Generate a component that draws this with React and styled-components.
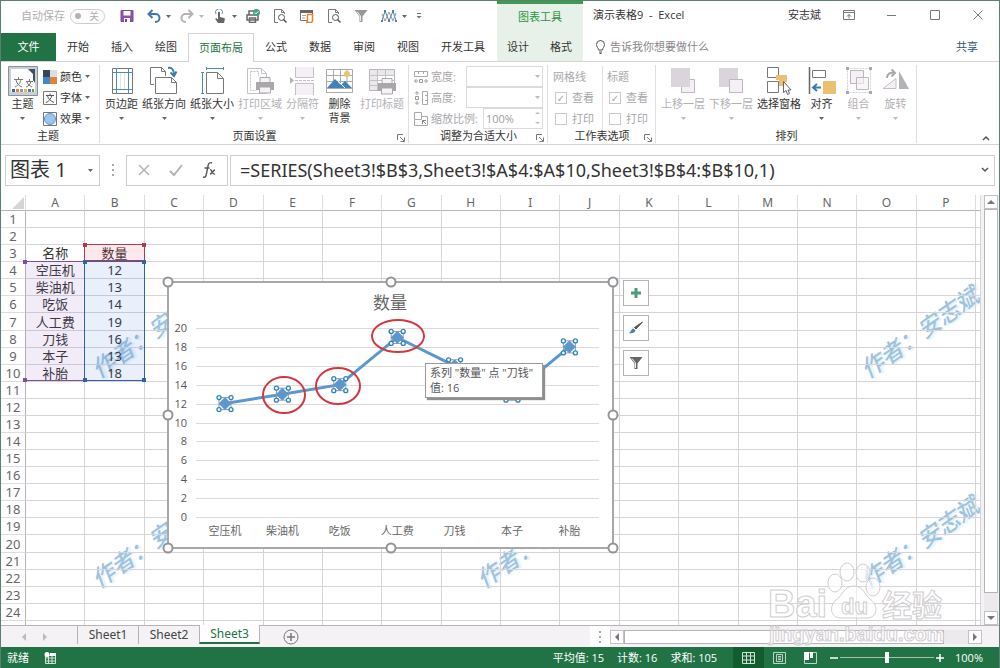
import React from "react";
import styled, { createGlobalStyle, css } from "styled-components";

const GlobalStyle = createGlobalStyle`
	* {
		box-sizing: border-box;
	}
	body {
		margin: 0;
		background: #fff;
		color: #333;
		font-family: "Open Sans", "Noto Sans CJK SC", sans-serif;
		font-size: 11px;
		line-height: 14px;
	}
	button, input, select {
		font: inherit;
		color: inherit;
	}
	button {
		padding: 0;
		border: 0;
		background: none;
	}
	svg {
		display: block;
		flex: none;
	}
`;

const Window = styled.div`
	position: relative;
	display: flex;
	flex-direction: column;
	height: 100vh;
	min-height: 600px;
	overflow: hidden;
	border: 1px solid #5c7f73;
	border-bottom: 0;
`;

/* title bar */

const HeadGrid = styled.div`
	display: grid;
	grid-template-columns: 496px 86px 1fr;
	height: ${(props) => props.$height}px;
`;

const QuickAccess = styled.div`
	display: flex;
	align-items: center;
	gap: 13px;
	padding: 0 0 2px 20px;
`;

const AutoSave = styled.label`
	display: flex;
	align-items: center;
	gap: 5px;
	margin-right: 2px;
	color: #b0adb2;
`;

const Toggle = styled.button`
	display: flex;
	align-items: center;
	justify-content: space-between;
	width: 35px;
	height: 15px;
	padding: 0 5px 0 4px;
	border: 1px solid #cfccd1;
	border-radius: 8px;
	font-size: 10px;
	line-height: 12px;

	&::before {
		content: "";
		width: 6px;
		height: 6px;
		border-radius: 50%;
		background: #b5b2b7;
	}
`;

const QuickButton = styled.button`
	display: flex;
	align-items: center;
	gap: 5px;
	margin-right: ${(props) => (props.$split ? "-4px" : "0")};
`;

const ContextTitle = styled.div`
	display: flex;
	align-items: center;
	justify-content: center;
	padding-bottom: 4px;
	border-top: 3px solid #3f9b4f;
	background: #e7f1e9;
	color: #2c9440;
`;

const TitleRight = styled.div`
	display: flex;
	align-items: center;
	justify-content: space-between;
	padding: 0 14px 4px 10px;
`;

const WindowButtons = styled.div`
	display: flex;
	align-items: center;
	gap: 29px;

	span {
		margin-right: -8px;
	}
`;

/* ribbon tabs */

const TabList = styled.div`
	display: flex;
	background: ${(props) => (props.$context ? "#e7f1e9" : "none")};
`;

const FileTab = styled.button`
	width: 55px;
	background: #217346;
	color: #fff;
`;

const Tab = styled.button`
	padding: 0 ${(props) => (props.$context ? "10px" : "11px")};
	${(props) =>
		props.$active &&
		css`
			position: relative;
			margin-bottom: -1px;
			border: 1px solid #d5d3d6;
			border-bottom: 0;
			padding: 0 10px;
			background: #fff;
			color: #217346;
		`}
`;

const TabsRight = styled.div`
	display: flex;
	align-items: center;
	justify-content: space-between;
	padding: 0 21px 0 12px;
	color: #8a878c;
`;

const TellMe = styled.button`
	display: flex;
	align-items: center;
	gap: 4px;
`;

const Share = styled.button`
	color: #2a5a74;
`;

/* ribbon */

const Ribbon = styled.div`
	display: flex;
	height: 84px;
	padding: 3px 0 1px;
	border-top: 1px solid #d5d3d6;
	border-bottom: 1px solid #d5d3d6;
`;

const Group = styled.section`
	position: relative;
	display: flex;
	flex-direction: column;
	justify-content: space-between;
	padding: 1px ${(props) => props.$end || 4}px 0 5px;
	border-right: 1px solid #e0dee1;
`;

const GroupTools = styled.div`
	display: flex;
	gap: 4px;
`;

const GroupLabel = styled.div`
	text-align: center;
	color: #333;
`;

const Launcher = styled.button`
	position: absolute;
	right: 3px;
	bottom: 1px;
`;

const BigButton = styled.button`
	display: flex;
	flex-direction: column;
	align-items: center;
	justify-content: flex-start;
	min-width: 33px;
	white-space: pre-line;
	color: ${(props) => (props.$off ? "#b3b0b5" : "#333")};

	svg + span {
		margin-top: 1px;
	}
	span + svg {
		margin-top: 6px;
	}
`;

const Stack = styled.div`
	display: flex;
	flex-direction: column;
`;

const SmallButton = styled.button`
	display: flex;
	align-items: center;
	gap: 3px;
	height: 21px;
`;

const FieldRow = styled.div`
	display: flex;
	align-items: center;
	gap: 3px;
	width: 129px;
	height: 21px;
	color: #a9a6ab;

	label {
		flex: 1;
	}
`;

const fieldBox = css`
	height: 21px;
	border: 1px solid #dddadf;
	background: #fff;
	color: #a09da2;
	border-radius: 0;
`;

const Select = styled.select`
	${fieldBox}
	width: 77px;
	appearance: none;
	opacity: 1;
`;

const FieldWrap = styled.span`
	position: relative;
	display: flex;

	> svg {
		position: absolute;
		right: 3px;
		top: ${(props) => (props.$spin ? 4 : 9)}px;
	}
`;

const ScaleInput = styled.input`
	${fieldBox}
	width: 60px;
	padding: 0 2px;
`;

const OptionColumn = styled.div`
	display: flex;
	flex-direction: column;
	width: ${(props) => (props.$line ? "50px" : "44px")};
	color: #a9a6ab;
	border-right: ${(props) => (props.$line ? "1px solid #e0dee1" : "0")};

	> div {
		height: 21px;
		line-height: 21px;
	}
`;

const Check = styled.label`
	display: flex;
	align-items: center;
	gap: 5px;
	height: 21px;
	padding-left: 2px;

	input {
		appearance: none;
		width: 12px;
		height: 12px;
		margin: 0;
		border: 1px solid #cbc8cd;
		background: #fff;
		font-size: 10px;
		line-height: 10px;
		text-align: center;
	}
	input:checked::before {
		content: "✓";
		font-family: "DejaVu Sans", sans-serif;
	}
`;

const CollapseButton = styled.button`
	margin: auto 9px 2px auto;
`;

/* formula bar */

const FormulaBar = styled.div`
	display: flex;
	align-items: center;
	height: 50px;
	padding: 0 4px;
`;

const formulaBox = css`
	display: flex;
	align-items: center;
	height: 31px;
	border: 1px solid #cfccd1;
	background: #fff;
`;

const NameBox = styled.div`
	${formulaBox}
	width: 95px;
	padding-right: 6px;

	input {
		flex: 1;
		min-width: 0;
		padding: 0 4px;
		border: 0;
		font-family: "Noto Sans", "Noto Sans CJK SC", sans-serif;
		font-size: 20px;
		line-height: 26px;
		outline: 0;
	}
`;

const Dots = styled.div`
	display: flex;
	flex-direction: column;
	gap: 3px;
	margin: 0 ${(props) => props.$space}px;

	&::before, &::after, span {
		content: "";
		width: 2px;
		height: 2px;
		background: #aaa7ac;
	}
`;

const FormulaButtons = styled.div`
	${formulaBox}
	justify-content: space-between;
	width: 102px;
	padding: 0 11px;
`;

const FormulaField = styled.div`
	${formulaBox}
	flex: 1;
	margin-left: 2px;
	padding-right: 5px;

	input {
		flex: 1;
		min-width: 0;
		padding: 0 9px;
		border: 0;
		font-family: "Noto Sans", "Noto Sans CJK SC", sans-serif;
		font-size: 18px;
		line-height: 26px;
		outline: 0;
	}
`;

/* sheet */

const SheetArea = styled.div`
	display: flex;
	flex: 1;
	min-height: 0;
	background: #f4f2f4;
`;

const Sheet = styled.div`
	position: relative;
	flex: 1;
	overflow: hidden;
	isolation: isolate;
	background: #fff;
`;

const Grid = styled.table`
	width: 100%;
	height: 100%;
	table-layout: fixed;
	border-collapse: separate;
	border-spacing: 0;
	color: #333;
	font-family: "Noto Sans", "Noto Sans CJK SC", sans-serif;
	font-size: 13px;
	line-height: 16px;
	text-align: center;

	th {
		padding: 0;
		color: #666;
		font-weight: 400;
	}
	thead th {
		height: 16px;
		border-right: 1px solid #dedcdf;
		border-bottom: 1px solid #b5b3b6;
		font-size: 12px;
		line-height: 15px;
	}
	tbody th {
		border-right: 1px solid #b5b3b6;
		border-bottom: 1px solid #dedcdf;
	}
	td {
		position: relative;
		padding: 0;
		border-right: 1px solid #d6d4d7;
		border-bottom: 1px solid #d6d4d7;
	}
	col:first-child {
		width: 25px;
	}
	col:last-child {
		width: 5px;
	}
	tbody tr:last-child > * {
		height: 4px;
		border-bottom: 0;
	}
`;

const Corner = styled.svg`
	margin-left: 11px;
`;

const Range = styled.div`
	position: absolute;
	z-index: 1;
	top: -1px;
	left: -1px;
	right: -1px;
	height: calc(${(props) => props.$rows * 100}% + ${(props) => props.$rows}px);
	border: solid ${(props) => props.$color};
	border-width: ${(props) => (props.$open ? "1px 0" : "1px")};
	background: ${(props) => props.$fill};
`;

const Handle = styled.i`
	position: absolute;
	width: 4px;
	height: 4px;
	background: ${(props) => props.$color};
	${(props) => props.$at.split(" ").map((side) => `${side}: -2px;`).join("")}
`;

const Signature = styled.span`
	position: absolute;
	z-index: -1;
	transform: rotate(-35deg);
	transform-origin: 12px 16px;
	color: #9dc3de;
	font-family: "Noto Sans CJK SC", sans-serif;
	font-size: 23px;
	font-style: italic;
	font-weight: 500;
	line-height: 32px;
	white-space: nowrap;
	text-shadow: 2px 2px 2px #e4f0f8;
`;

const ChartObject = styled.div`
	position: absolute;
	z-index: 2;
	top: 81px;
	left: 161px;
`;

const ChartTip = styled.div`
	position: absolute;
	top: 87px;
	left: 263px;
	width: 118px;
	padding: 1px 4px 2px;
	border: 1px solid #9a9a9a;
	background: #fff;
	box-shadow: 2px 2px 1px #8f8f8f;
	color: #555;
	line-height: 15px;
	white-space: nowrap;
`;

const ChartButtons = styled.div`
	position: absolute;
	top: 4px;
	left: 461px;
	display: flex;
	flex-direction: column;
	gap: 9px;

	button {
		display: grid;
		place-items: center;
		width: 26px;
		height: 26px;
		border: 1px solid #b5b3b6;
		background: #fff;
	}
`;

const ScrollButton = styled.button`
	display: grid;
	flex: none;
	place-items: center;
	width: 14px;
	height: 14px;
	border: 1px solid #c4c1c6;
	background: #fff;
`;

const VScroll = styled.div`
	display: flex;
	flex-direction: column;
	width: 14px;
	margin: 0 1px 0 3px;
	background: #eceaed;
`;

const Thumb = styled.div`
	flex: ${(props) => props.$size};
	border: 1px solid #b5b3b6;
	background: #fff;
`;

const Track = styled.div`
	flex: ${(props) => props.$size};
`;

/* sheet tabs and status bar */

const SheetTabs = styled.div`
	display: flex;
	height: 22px;
	border-top: 1px solid #b5b3b6;
	background: #f4f2f4;
`;

const SheetNav = styled.div`
	display: flex;
	align-items: center;
	gap: 13px;
	width: 76px;
	padding-left: 19px;
`;

const SheetTab = styled.button`
	width: 61px;
	height: 18px;
	border-left: 1px solid #b5b3b6;
	color: #444;
	font-family: "Noto Sans", sans-serif;
	font-size: 12px;
	line-height: 16px;
	${(props) =>
		props.$active &&
		css`
			margin-top: -1px;
			height: 19px;
			border-right: 1px solid #b5b3b6;
			border-bottom: 2px solid #217346;
			background: #fff;
			color: #217346;
		`}
`;

const AddSheet = styled.button`
	margin: 0 auto 0 23px;
`;

const HScrollArea = styled.div`
	display: flex;
	align-items: center;
	width: 41%;
	padding-right: 17px;
	background: linear-gradient(90deg, #fff 20px, #f4f2f4 20px);
`;

const HScroll = styled.div`
	display: flex;
	flex: 1;
	height: 14px;
	background: #eceaed;
`;

const StatusBar = styled.footer`
	display: flex;
	align-items: center;
	height: 21px;
	padding: 0 16px 0 6px;
	background: #217346;
	color: #fff;
`;

const StatusLeft = styled.div`
	display: flex;
	gap: 15px;
	margin-right: auto;
`;

const Totals = styled.div`
	display: flex;
	gap: 13px;
	margin-right: 16px;
`;

const ViewButton = styled.button`
	display: grid;
	place-items: center;
	width: 31px;
	height: 21px;
	background: ${(props) => (props.$active ? "#125c30" : "none")};
`;

const Zoom = styled.div`
	display: flex;
	align-items: center;
	gap: 2px;
	margin: 0 11px 0 4px;

	input {
		appearance: none;
		width: 94px;
		height: 14px;
		margin: 0;
		background: linear-gradient(#9cc4ac, #9cc4ac) center / 100% 1px no-repeat;
	}
	input::-webkit-slider-thumb {
		appearance: none;
		width: 4px;
		height: 11px;
		background: #fff;
	}
`;

const SiteMark = styled.svg`
	position: absolute;
	z-index: 5;
	right: 50px;
	bottom: 18px;
	pointer-events: none;
`;

/* icons */

const Icon = ({ w = 14, h = 14, children }) => (
	<svg width={w} height={h} viewBox={`0 0 ${w} ${h}`} fill="none" stroke="#777" aria-hidden="true">
		{children}
	</svg>
);

const Caret = ({ color = "#666" }) => (
	<svg width="5" height="3" viewBox="0 0 5 3" fill={color} aria-hidden="true">
		<path d="M0 0h5L2.500 3z" />
	</svg>
);

const Arrow = ({ dir = 0, color = "#777" }) => (
	<svg width="8" height="8" viewBox="0 0 8 8" fill={color} aria-hidden="true">
		<path d="M2 0l4 4-4 4z" transform={`rotate(${dir} 4 4)`} />
	</svg>
);

const SaveIcon = () => (
	<Icon>
		<path d="M1 1.500h12v11H1z" fill="#8d52ad" stroke="#7d449e" />
		<path d="M3.500 2h7v4.500h-7zM4 9h6v4H4z" fill="#fff" stroke="none" />
		<path d="M5 10h2v3H5z" fill="#7d449e" stroke="none" />
	</Icon>
);

const UndoIcon = ({ color, flip }) => (
	<Icon>
		<g transform={flip ? "matrix(-1 0 0 1 14 0)" : undefined} stroke={color} strokeWidth="2">
			<path d="M1.500 5h7a4 4 0 0 1 0 8H8M5.500 1L1.500 5l4 4" />
		</g>
	</Icon>
);

const TouchIcon = () => (
	<Icon>
		<path d="M3 5a3.500 3.500 0 1 1 6 0" stroke="#5b88ad" />
		<path d="M5 3.500c0-1 2-1 2 0V8l4 1c1 .4 1 1 .7 2L11 14H5L2.500 10.500c-.5-1 .8-1.500 1.500-.8l1 .8z" fill="#666" stroke="none" />
	</Icon>
);

const QuickPrintIcon = () => (
	<Icon>
		<path d="M3 6V2h5M1 6h11v5H1zM3.500 9h6v4.500h-6z" stroke="#666" strokeWidth="1.500" fill="#fff" />
		<circle cx="10.500" cy="3.500" r="3.500" fill="#45a480" stroke="none" />
		<path d="M8.800 3.500l1.200 1.300 2.300-2.500" stroke="#fff" />
	</Icon>
);

const PreviewIcon = () => (
	<Icon>
		<path d="M5 13.500H1.500V.5h7l3 3V5M8.500.5v3h3" />
		<circle cx="8.500" cy="8.500" r="3" stroke="#555" />
		<path d="M10.500 10.500l3 3" stroke="#555" strokeWidth="1.500" />
	</Icon>
);

const SheetScriptIcon = () => (
	<Icon>
		<path d="M.5 1.500h12v10H.5z" />
		<path d="M0 1h13v3H0z" fill="#666" stroke="none" />
		<path d="M2 6.500h4M2 9h3" stroke="#aaa" />
		<path d="M7.500 5.500h5v6c0 1.500-1 2-2 2H6c1 0 1.500-.7 1.500-2z" stroke="#dd8436" strokeWidth="1.500" fill="#fff" />
	</Icon>
);

const FunnelIcon = ({ dark }) => (
	<Icon>
		<path d="M.5 1h13L8.500 7.500V13h-3V7.500z" fill={dark ? "#666" : "#999"} stroke="none" />
		<path d="M3 2.500L6.500 7v5" stroke="#eee" />
	</Icon>
);

const WaveIcon = () => (
	<Icon w={16}>
		<path d="M1 12L4 2l4 10 4-10 3 10" stroke="#3d83b5" />
		<path d="M1 5l3 7 4-9 4 9 3-8" stroke="#999" />
		<path d="M0 11h2v2H0zM3 1h2v2H3zM7 11h2v2H7zM11 1h2v2h-2zM14 11h2v2h-2z" fill="#55829f" stroke="none" />
	</Icon>
);

const LauncherIcon = () => (
	<Icon w={8} h={8}>
		<path d="M.5 6V.5H6M3 3l4 4M7.500 3.500v4h-4" />
	</Icon>
);

const ThemeIcon = () => (
	<Icon w={30} h={30}>
		<path d="M.5.5h29v29H.5z" fill="#c9cfd4" stroke="#8a9197" />
		<path d="M3 3h18l6 5v18H3z" fill="#fff" stroke="none" />
		<path d="M20 3h7v14l-2-3V8z" fill="#3f5166" stroke="none" />
		<path d="M6 13.500h9M10.500 11v2.500M7 21c4-2 5-4 6-7.500M8 14c1 4 3 6 6 7M18 15.500h7M21.500 13v2.500M18 21c3-1 4-3 5-5.500M19 16c1 3 3 4 5 5" stroke="#777" />
		<path d="M4 23h3v3H4z" fill="#47668f" stroke="none" />
		<path d="M8 23h3v3H8z" fill="#d98943" stroke="none" />
		<path d="M12 23h3v3h-3z" fill="#999" stroke="none" />
		<path d="M16 23h3v3h-3z" fill="#e4b93d" stroke="none" />
		<path d="M20 23h3v3h-3z" fill="#4a7fb8" stroke="none" />
		<path d="M24 23h2v3h-2z" fill="#6a9c50" stroke="none" />
	</Icon>
);

const ColorsIcon = () => (
	<Icon>
		<path d="M0 0h7v7H0z" fill="#3a4656" stroke="none" />
		<path d="M7 0h7v7H7z" fill="#dcdfe2" stroke="none" />
		<path d="M0 7h7v7H0z" fill="#4288c9" stroke="none" />
		<path d="M7 7h7v7H7z" fill="#e78137" stroke="none" />
	</Icon>
);

const FontsIcon = () => (
	<Icon>
		<path d="M.5.5h13v13H.5z" />
		<path d="M3 4.500h8M7 2.500v2M3 11.500c3-1 5-4 6-7M4.500 5c1 3 3 5 6.500 6.500" stroke="#555" />
	</Icon>
);

const EffectsIcon = () => (
	<Icon>
		<path d="M.5.5h13v13H.5z" />
		<circle cx="7" cy="7" r="5.500" fill="#9ec5ec" stroke="#5e96cc" />
	</Icon>
);

const MarginsIcon = () => (
	<Icon w={32} h={30}>
		<path d="M6.500 2.500h20v25h-20z" />
		<path d="M10.500 2v26M22.500 2v26M6 6.500h21M6 23.500h21" stroke="#4d8cae" />
		<path d="M14.500 7v16M18.500 7v16" stroke="#e4e4e4" />
	</Icon>
);

const OrientationIcon = () => (
	<Icon w={32} h={30}>
		<path d="M6 18.500H2.500v-17h11l4 4V10M13.500 1.500v4h4" />
		<path d="M7.500 11.500h16l5 5v11h-21zM23.500 11.500v5h5" fill="#fff" />
		<path d="M20 2c4-1 6 2 6 7M22.500 6.500l3.500 3.500 2.500-4.500" stroke="#3a7db4" strokeWidth="2" />
	</Icon>
);

const SizeIcon = () => (
	<Icon w={32} h={30}>
		<path d="M10.500 6.500h11l6 6v15h-17zM21.500 6.500v6h6" />
		<path d="M10 2.500h18M10.500 1v3M27.500 1v3M6.500 6v22M5 6.500h3M5 27.500h3" stroke="#4d8cae" />
	</Icon>
);

const Printer = ({ x, y }) => (
	<g transform={`translate(${x} ${y})`}>
		<path d="M4 5V.5h10V5" fill="#f5f3f6" stroke="#aaa7ac" />
		<path d="M0 5h18v8H0z" fill="#aaa7ac" stroke="none" />
		<path d="M3.500 10h11v6h-11z" fill="#f5f3f6" stroke="#aaa7ac" />
	</g>
);

const PrintAreaIcon = () => (
	<Icon w={32} h={30}>
		<path d="M3.500 2.500h14l5 5v20h-19zM17.500 2.500v5h5" stroke="#c4c1c6" />
		<path d="M6.500 5.500h8v5M6.500 5.500v19h6" stroke="#c4c1c6" strokeDasharray="2 1" />
		<Printer x={12} y={11} />
	</Icon>
);

const BreaksIcon = () => (
	<Icon w={32} h={30}>
		<path d="M8.500 1v10.500h18V1M8.500 29V17.500h18V29" fill="#f5f0f6" stroke="#c4c1c6" />
		<path d="M8 14.500h19" stroke="#c4c1c6" strokeDasharray="3 1" />
		<path d="M3 11l4 3.500L3 18z" fill="#b5b2b7" stroke="none" />
	</Icon>
);

const BackgroundIcon = () => (
	<Icon w={32} h={30}>
		<path d="M2.500 3.500h26v23h-26zM2 9.500h27M2 15.500h27M9.500 3v23M16.500 3v23M23 3v23" stroke="#aaa" />
		<circle cx="23" cy="8" r="3" fill="#ecc46b" stroke="none" />
		<path d="M3 22l8-9 6 6 4-4 8 8v1H3z" fill="#3f82bd" stroke="none" />
		<path d="M13 14l9 9" stroke="#fff" />
		<path d="M2.500 22.500h26v4h-26z" fill="#fff" stroke="#aaa" />
	</Icon>
);

const PrintTitlesIcon = () => (
	<Icon w={32} h={30}>
		<path d="M3.500 3.500h25v21h-25z" stroke="#b9b6bb" />
		<path d="M4 4h24v5H4zM4 9h7v15H4z" fill="#ebe8ec" stroke="none" />
		<path d="M3 9.500h26M3 14.500h26M3 19.500h26M11.500 3v21M19.500 3v21" stroke="#c4c1c6" />
		<Printer x={12} y={12} />
	</Icon>
);

const WidthIcon = () => (
	<Icon>
		<path d="M.5 1.500h13v5H.5zM4.500 2v2M9.500 2v2" stroke="#aaa" />
		<path d="M2.500 9L.5 11l2 2M11.500 9l2 2-2 2M1 11h3M10 11h3M5.500 9.500h3v3h-3z" stroke="#999" />
	</Icon>
);

const HeightIcon = () => (
	<Icon>
		<path d="M8.500.5h5v13h-5zM11 4.500h2M11 9.500h2" stroke="#aaa" />
		<path d="M1 2.500l2-2 2 2M1 11.500l2 2 2-2M3 1v3M3 10v3M1.500 5.500h3v3h-3z" stroke="#999" />
	</Icon>
);

const ScaleIcon = () => (
	<Icon>
		<path d="M.5.5h7v7h-7zM.5 7.500v6h13v-9h-6" stroke="#aaa" />
		<path d="M12 12L8.500 8.500M8.500 12V8.500H12" stroke="#888" />
	</Icon>
);

const ForwardIcon = () => (
	<Icon w={32} h={30}>
		<path d="M14.500 13.500h13v13h-13z" fill="#f5f0f6" stroke="#bbb8bd" />
		<path d="M4 2h19v19H4z" fill="#d9d5da" stroke="none" />
	</Icon>
);

const BackwardIcon = () => (
	<Icon w={32} h={30}>
		<path d="M4 2h19v19H4z" fill="#d9d5da" stroke="none" />
		<path d="M14.500 13.500h13v13h-13z" fill="#f5f0f6" stroke="#bbb8bd" />
	</Icon>
);

const SelectionIcon = () => (
	<Icon w={32} h={30}>
		<path d="M4.500 1.500h11v10h-11zM4.500 15.500h11v11h-11z" />
		<path d="M13 9h11v7h-3v4h-5v-6h-3z" fill="#ebc071" stroke="none" />
		<path d="M20.500 15.500v11l2.500-2 1.500 4 2-1-1.500-3.500h3z" fill="#fff" stroke="#666" />
	</Icon>
);

const AlignIcon = () => (
	<Icon w={32} h={30}>
		<path d="M3.500 1v27" stroke="#666" strokeWidth="1.500" />
		<path d="M6.500 4.500h13v7h-13z" />
		<path d="M17 15h13v13H17z" fill="#ebc071" stroke="none" />
		<path d="M15 21.500H8M11 18l-4 3.500 4 3.500" stroke="#3a7db4" strokeWidth="2" />
	</Icon>
);

const GroupIcon = () => (
	<Icon w={32} h={30}>
		<path d="M4.500 2.500h23v24h-23z" stroke="#d5d2d7" strokeDasharray="2 1" />
		<path d="M7.500 4.500h13v13h-13z" fill="#f5f0f6" stroke="#bbb8bd" />
		<path d="M13.500 11.500h12v12h-12z" fill="#f5f0f6" fillOpacity="0.6" stroke="#bbb8bd" />
		<path d="M3 1h3v3H3zM26 1h3v3h-3zM3 25h3v3H3zM26 25h3v3h-3z" fill="#aaa7ac" stroke="none" />
	</Icon>
);

const RotateIcon = () => (
	<Icon w={32} h={30}>
		<path d="M3 22.500h13v-10z" stroke="#c4c1c6" fill="#f5f0f6" />
		<path d="M19 5v18h10z" fill="#b5b2b7" stroke="none" />
		<path d="M7 12c0-4 3-6 8-5M11.500 3.500L15 7l-3.500 3.500" stroke="#aaa7ac" strokeWidth="2" />
	</Icon>
);

const CHART_POINTS = [
	["空压机", 12],
	["柴油机", 13],
	["吃饭", 14],
	["人工费", 19],
	["刀钱", 16],
	["本子", 13],
	["补胎", 18],
];
const CIRCLED = [
	[122, 119, 21, 18],
	[176, 110, 22, 18],
	[236, 60, 26, 16],
];
const COLUMNS = "ABCDEFGHIJKLMNOP".split("");
const SHEET_ROWS = Array.from({ length: 24 }, (_, i) => i + 1);
const SIGNATURES = [[90, 153], [90, 363], [475, 363], [859, 153], [859, 363]];
const FRAME_HANDLES = [[6, 6], [229, 6], [451, 6], [6, 139], [451, 139], [6, 272], [229, 272], [451, 272]];

const pointX = (index) => 63 + index * 57.4;
const valueY = (value) => 241 - value * 9.45;

const LineChart = () => (
	<svg width="458" height="278" viewBox="0 0 458 278" fontFamily="'Open Sans', 'Noto Sans CJK SC', sans-serif" fontSize="11" fill="#666">
		<rect x="6" y="6" width="445" height="266" fill="#fff" stroke="#a9a7aa" strokeWidth="2" />
		<text x="228" y="33" fontSize="17" textAnchor="middle">数量</text>
		{Array.from({ length: 11 }, (_, i) => i * 2).map((value) => (
			<g key={value}>
				<path d={`M34 ${Math.round(valueY(value)) + 0.5}H437`} stroke="#dcdadd" />
				<text x="25" y={valueY(value) + 4} textAnchor="end" fill="#555">{value}</text>
			</g>
		))}
		<polyline
			points={CHART_POINTS.map(([, value], i) => `${pointX(i)},${valueY(value)}`).join(" ")}
			fill="none"
			stroke="#5b97cd"
			strokeWidth="3"
		/>
		{CHART_POINTS.map(([name, value], i) => (
			<g key={name}>
				<g transform={`translate(${pointX(i)} ${valueY(value)})`}>
					<path d="M-6-6H6V6H-6z" fill="none" stroke="#999" />
					<path d="M0-6L6 0 0 6-6 0z" fill="#5b97cd" stroke="#5b97cd" />
					{[[-6, -6], [6, -6], [-6, 6], [6, 6]].map(([x, y]) => (
						<circle key={`${x}${y}`} cx={x} cy={y} r="2" fill="#fff" stroke="#2f83ba" strokeWidth="1.300" />
					))}
				</g>
				<text x={pointX(i)} y="259" textAnchor="middle">{name}</text>
			</g>
		))}
		{CIRCLED.map(([cx, cy, rx, ry]) => (
			<ellipse key={cx} cx={cx} cy={cy} rx={rx} ry={ry} fill="none" stroke="#d2383f" strokeWidth="2" />
		))}
		{FRAME_HANDLES.map(([x, y]) => (
			<circle key={`${x}-${y}`} cx={x} cy={y} r="4.500" fill="#fff" stroke="#959396" strokeWidth="2" />
		))}
	</svg>
);

const Selection = ({ color, handles, ...rest }) => (
	<Range $color={color} {...rest}>
		{handles.map((at) => (
			<Handle key={at} $at={at} $color={color} />
		))}
	</Range>
);

const CORNERS = ["top left", "top right", "bottom left", "bottom right"];

const cellText = (column, row) => {
	if (row === 3) return { A: "名称", B: "数量" }[column];
	const point = CHART_POINTS[row - 4];
	return point && { A: point[0], B: point[1] }[column];
};

const cellRange = (column, row) => {
	if (column === "A" && row === 4)
		return <Selection color="#7c4fa0" $fill="rgba(150, 100, 200, 0.12)" $rows={7} $open handles={["top left", "bottom left"]} />;
	if (column === "B" && row === 3)
		return <Selection color="#b13c50" $fill="rgba(240, 80, 100, 0.13)" $rows={1} handles={CORNERS.slice(0, 2)} />;
	if (column === "B" && row === 4)
		return <Selection color="#2f62a8" $fill="rgba(70, 120, 225, 0.12)" $rows={7} handles={CORNERS} />;
	return null;
};

const RibbonButton = ({ icon, label, off, menu = true }) => (
	<BigButton $off={off} disabled={off}>
		{icon}
		<span>{label}</span>
		{menu && <Caret color={off ? "#bbb" : "#666"} />}
	</BigButton>
);

const Title = () => (
	<HeadGrid as="header" $height={32}>
		<QuickAccess>
			<AutoSave>
				自动保存
				<Toggle>关</Toggle>
			</AutoSave>
			<QuickButton aria-label="保存"><SaveIcon /></QuickButton>
			<QuickButton aria-label="撤消" $split><UndoIcon color="#3c78b4" /><Caret /></QuickButton>
			<QuickButton aria-label="恢复" $split><UndoIcon color="#b5b2b7" flip /><Caret color="#bbb" /></QuickButton>
			<QuickButton aria-label="触摸模式" $split><TouchIcon /><Caret /></QuickButton>
			<QuickButton aria-label="快速打印"><QuickPrintIcon /></QuickButton>
			<QuickButton aria-label="打印预览"><PreviewIcon /></QuickButton>
			<QuickButton aria-label="宏"><SheetScriptIcon /></QuickButton>
			<QuickButton aria-label="全屏预览"><PreviewIcon /></QuickButton>
			<QuickButton aria-label="筛选"><FunnelIcon /></QuickButton>
			<QuickButton aria-label="形状" $split><WaveIcon /><Caret /></QuickButton>
			<QuickButton aria-label="自定义">
				<Icon w={6} h={8}>
					<path d="M1 1.500h4" />
					<path d="M.5 4h5L3 6.500z" fill="#777" stroke="none" />
				</Icon>
			</QuickButton>
		</QuickAccess>
		<ContextTitle>图表工具</ContextTitle>
		<TitleRight>
			<span>演示表格9&nbsp; -&nbsp; Excel</span>
			<WindowButtons>
				<span>安志斌</span>
				<button aria-label="功能区显示选项">
					<Icon>
						<path d="M1.500 2.500h11v9h-11zM1 4.500h12M7 10.500V6.500M5 8.500l2-2 2 2" />
					</Icon>
				</button>
				<button aria-label="最小化"><Icon><path d="M2 7.500h9" /></Icon></button>
				<button aria-label="最大化"><Icon><path d="M2.500 2.500h9v9h-9z" /></Icon></button>
				<button aria-label="关闭"><Icon><path d="M2.500 2.500l9 9M11.500 2.500l-9 9" /></Icon></button>
			</WindowButtons>
		</TitleRight>
	</HeadGrid>
);

const RibbonTabs = () => (
	<HeadGrid as="nav" $height={28}>
		<TabList>
			<FileTab>文件</FileTab>
			{["开始", "插入", "绘图", "页面布局", "公式", "数据", "审阅", "视图", "开发工具"].map((name) => (
				<Tab key={name} $active={name === "页面布局"}>{name}</Tab>
			))}
		</TabList>
		<TabList $context>
			<Tab $context>设计</Tab>
			<Tab>格式</Tab>
		</TabList>
		<TabsRight>
			<TellMe>
				<Icon w={11} h={14}>
					<path d="M3.500 10C3.500 8 1.500 7 1.500 4.500a4 4 0 0 1 8 0C9.500 7 7.500 8 7.500 10zM4 12h3M4.500 13.500h2" stroke="#555" />
				</Icon>
				告诉我你想要做什么
			</TellMe>
			<Share>共享</Share>
		</TabsRight>
	</HeadGrid>
);

const RibbonPanel = () => (
	<Ribbon>
		<Group $end={9}>
			<GroupTools>
				<RibbonButton icon={<ThemeIcon />} label="主题" />
				<Stack>
					<SmallButton><ColorsIcon />颜色<Caret /></SmallButton>
					<SmallButton><FontsIcon />字体<Caret /></SmallButton>
					<SmallButton><EffectsIcon />效果<Caret /></SmallButton>
				</Stack>
			</GroupTools>
			<GroupLabel>主题</GroupLabel>
		</Group>
		<Group>
			<GroupTools>
				<RibbonButton icon={<MarginsIcon />} label="页边距" />
				<RibbonButton icon={<OrientationIcon />} label="纸张方向" />
				<RibbonButton icon={<SizeIcon />} label="纸张大小" />
				<RibbonButton icon={<PrintAreaIcon />} label="打印区域" off />
				<RibbonButton icon={<BreaksIcon />} label="分隔符" off />
				<RibbonButton icon={<BackgroundIcon />} label={"删除\n背景"} menu={false} />
				<RibbonButton icon={<PrintTitlesIcon />} label="打印标题" off menu={false} />
			</GroupTools>
			<GroupLabel>页面设置</GroupLabel>
			<Launcher aria-label="页面设置"><LauncherIcon /></Launcher>
		</Group>
		<Group>
			<Stack>
				<FieldRow>
					<WidthIcon />
					<label htmlFor="fit-width">宽度:</label>
					<FieldWrap><Select id="fit-width" disabled /><Caret color="#bbb" /></FieldWrap>
				</FieldRow>
				<FieldRow>
					<HeightIcon />
					<label htmlFor="fit-height">高度:</label>
					<FieldWrap><Select id="fit-height" disabled /><Caret color="#bbb" /></FieldWrap>
				</FieldRow>
				<FieldRow>
					<ScaleIcon />
					<label htmlFor="fit-scale">缩放比例:</label>
					<FieldWrap $spin>
						<ScaleInput id="fit-scale" defaultValue="100%" disabled />
						<Icon w={5} h={14}>
							<path d="M0 2h5L2.500 0zM0 10h5l-2.500 2z" fill="#bbb" stroke="none" />
						</Icon>
					</FieldWrap>
				</FieldRow>
			</Stack>
			<GroupLabel>调整为合适大小</GroupLabel>
			<Launcher aria-label="调整为合适大小"><LauncherIcon /></Launcher>
		</Group>
		<Group>
			<GroupTools>
				{["网格线", "标题"].map((name, i) => (
					<OptionColumn key={name} $line={i === 0}>
						<div>{name}</div>
						<Check><input type="checkbox" defaultChecked disabled />查看</Check>
						<Check><input type="checkbox" disabled />打印</Check>
					</OptionColumn>
				))}
			</GroupTools>
			<GroupLabel>工作表选项</GroupLabel>
			<Launcher aria-label="工作表选项"><LauncherIcon /></Launcher>
		</Group>
		<Group>
			<GroupTools>
				<RibbonButton icon={<ForwardIcon />} label="上移一层" off />
				<RibbonButton icon={<BackwardIcon />} label="下移一层" off />
				<RibbonButton icon={<SelectionIcon />} label="选择窗格" menu={false} />
				<RibbonButton icon={<AlignIcon />} label="对齐" />
				<RibbonButton icon={<GroupIcon />} label="组合" off />
				<RibbonButton icon={<RotateIcon />} label="旋转" off />
			</GroupTools>
			<GroupLabel>排列</GroupLabel>
		</Group>
		<CollapseButton aria-label="折叠功能区">
			<Icon w={8} h={6}><path d="M1 5l3-3 3 3" stroke="#555" strokeWidth="1.500" /></Icon>
		</CollapseButton>
	</Ribbon>
);

const Formula = () => (
	<FormulaBar>
		<NameBox>
			<input aria-label="名称框" defaultValue="图表 1" />
			<Caret />
		</NameBox>
		<Dots $space={12}><span /></Dots>
		<FormulaButtons>
			<button aria-label="取消"><Icon w={12}><path d="M1 2l10 10M11 2L1 12" stroke="#b5b2b7" strokeWidth="1.500" /></Icon></button>
			<button aria-label="输入"><Icon><path d="M1 8l4 4 8-10" stroke="#b5b2b7" strokeWidth="2" /></Icon></button>
			<button aria-label="插入函数">
				<Icon w={14} h={18}>
					<path d="M1 16c3 1 3-1 4-6l1-5c.5-3 2-4 4-3M2.500 7h5M8 9c2-1 2 5 5 4M13 9c-2 0-3 4-5 4" stroke="#555" strokeWidth="1.400" />
				</Icon>
			</button>
		</FormulaButtons>
		<FormulaField>
			<input aria-label="编辑栏" defaultValue="=SERIES(Sheet3!$B$3,Sheet3!$A$4:$A$10,Sheet3!$B$4:$B$10,1)" />
			<Icon w={8} h={6}><path d="M1 1l3 3 3-3" stroke="#555" strokeWidth="1.500" /></Icon>
		</FormulaField>
	</FormulaBar>
);

const Worksheet = () => (
	<SheetArea>
		<Sheet>
			{SIGNATURES.map(([left, top]) => (
				<Signature key={`${left}-${top}`} style={{ left, top }}>作者：安志斌</Signature>
			))}
			<Grid>
				<colgroup>
					<col />
					{COLUMNS.map((column) => <col key={column} />)}
					<col />
				</colgroup>
				<thead>
					<tr>
						<th>
							<Corner width="12" height="12" viewBox="0 0 12 12"><path d="M12 0v12H0z" fill="#d5d3d6" /></Corner>
						</th>
						{COLUMNS.map((column) => <th key={column}>{column}</th>)}
						<th />
					</tr>
				</thead>
				<tbody>
					{SHEET_ROWS.map((row) => (
						<tr key={row}>
							<th>{row}</th>
							{COLUMNS.map((column) => (
								<td key={column}>
									{cellText(column, row)}
									{cellRange(column, row)}
								</td>
							))}
							<td />
						</tr>
					))}
					<tr>
						<th />
						{COLUMNS.map((column) => <td key={column} />)}
						<td />
					</tr>
				</tbody>
			</Grid>
			<ChartObject>
				<LineChart />
				<ChartTip>
					系列 "数量" 点 "刀钱"
					<br />
					值: 16
				</ChartTip>
				<ChartButtons>
					<button aria-label="图表元素">
						<Icon><path d="M7 2v10M2 7h10" stroke="#4f9c7d" strokeWidth="3" /></Icon>
					</button>
					<button aria-label="图表样式">
						<Icon>
							<path d="M13.500 1L7 8 5.500 6.500z" fill="#555" stroke="#555" />
							<path d="M6.500 9.500C6 12 3 12.500 0 12c2-1 2-4 4.500-4.500z" fill="#4683a8" stroke="none" />
						</Icon>
					</button>
					<button aria-label="图表筛选器"><FunnelIcon dark /></button>
				</ChartButtons>
			</ChartObject>
		</Sheet>
		<VScroll>
			<ScrollButton aria-label="向上"><Arrow dir={-90} /></ScrollButton>
			<Thumb $size={385} />
			<Track $size={18} />
			<ScrollButton aria-label="向下"><Arrow dir={90} /></ScrollButton>
		</VScroll>
	</SheetArea>
);

const SheetStrip = () => (
	<SheetTabs>
		<SheetNav>
			<button aria-label="上一个"><Arrow dir={180} color="#bbb" /></button>
			<button aria-label="下一个"><Arrow color="#bbb" /></button>
		</SheetNav>
		{["Sheet1", "Sheet2", "Sheet3"].map((name) => (
			<SheetTab key={name} $active={name === "Sheet3"}>{name}</SheetTab>
		))}
		<AddSheet aria-label="新工作表">
			<Icon w={16} h={16}>
				<circle cx="8" cy="8" r="7" />
				<path d="M8 4v8M4 8h8" strokeWidth="1.500" />
			</Icon>
		</AddSheet>
		<HScrollArea>
			<Dots $space={9}><span /></Dots>
			<HScroll>
				<ScrollButton aria-label="向左"><Arrow dir={180} /></ScrollButton>
				<Thumb $size={320} />
				<Track $size={24} />
				<ScrollButton aria-label="向右"><Arrow /></ScrollButton>
			</HScroll>
		</HScrollArea>
	</SheetTabs>
);

const Status = () => (
	<StatusBar>
		<StatusLeft>
			<span>就绪</span>
			<Icon w={12} h={14}>
				<path d="M1.500 4.500h10v8h-10zM1 7h10M1 10h10M4.500 5v8M8 5v8" stroke="#cfe3d7" />
				<path d="M6 2h6v3H6z" fill="#fff" stroke="none" />
				<circle cx="3" cy="3.500" r="2.500" fill="#fff" stroke="none" />
			</Icon>
		</StatusLeft>
		<Totals>
			<span>平均值: 15</span>
			<span>计数: 16</span>
			<span>求和: 105</span>
		</Totals>
		<ViewButton $active aria-label="普通">
			<Icon w={13} h={12}><path d="M.5.5h12v11H.5zM0 4h13M0 8h13M4.500 0v12M8.500 0v12" stroke="#cfe3d7" /></Icon>
		</ViewButton>
		<ViewButton aria-label="页面布局">
			<Icon w={13} h={12}><path d="M.5.5h12v11H.5zM3.500 2.500h6v7h-6zM5 4.500h3M5 6h3M5 7.500h3" stroke="#b9d5c5" /></Icon>
		</ViewButton>
		<ViewButton aria-label="分页预览">
			<Icon w={13} h={12}>
				<path d="M.5.5h12v11H.5z" stroke="#b9d5c5" />
				<path d="M0 0h5v8H0zM6 0h3v6H6z" fill="#fff" stroke="none" />
			</Icon>
		</ViewButton>
		<Zoom>
			<button aria-label="缩小"><Icon w={8} h={8}><path d="M0 4h8" stroke="#fff" strokeWidth="1.500" /></Icon></button>
			<input type="range" aria-label="缩放" min="0" max="100" defaultValue="50" />
			<button aria-label="放大"><Icon w={8} h={8}><path d="M0 4h8M4 0v8" stroke="#fff" strokeWidth="1.500" /></Icon></button>
		</Zoom>
		<span>100%</span>
	</StatusBar>
);

export default function App() {
	return (
		<Window>
			<GlobalStyle />
			<Title />
			<RibbonTabs />
			<RibbonPanel />
			<Formula />
			<Worksheet />
			<SheetStrip />
			<Status />
			<SiteMark width="184" height="90" viewBox="0 0 184 90" fill="#fff" fillOpacity="0.6" stroke="#cfcdd0" strokeWidth="1" aria-hidden="true">
				<ellipse cx="70" cy="23" rx="7" ry="9" />
				<ellipse cx="82" cy="12" rx="7" ry="9" />
				<ellipse cx="98" cy="13" rx="7" ry="9" />
				<ellipse cx="108" cy="27" rx="7" ry="9" />
				<path d="M89 26c9 0 11 9 17 14 8 6 6 18-4 18H76c-11 0-12-12-5-18 7-5 8-14 18-14z" />
				<g fontFamily="'Liberation Sans', 'Noto Sans CJK SC', sans-serif" fontWeight="700">
					<text x="3" y="57" fontSize="38">Bai</text>
					<text x="76" y="54" fontSize="22">du</text>
					<text x="117" y="56" fontSize="30">经验</text>
					<text x="4" y="81" fontSize="20">jingyan.baidu.com</text>
				</g>
			</SiteMark>
		</Window>
	);
}
